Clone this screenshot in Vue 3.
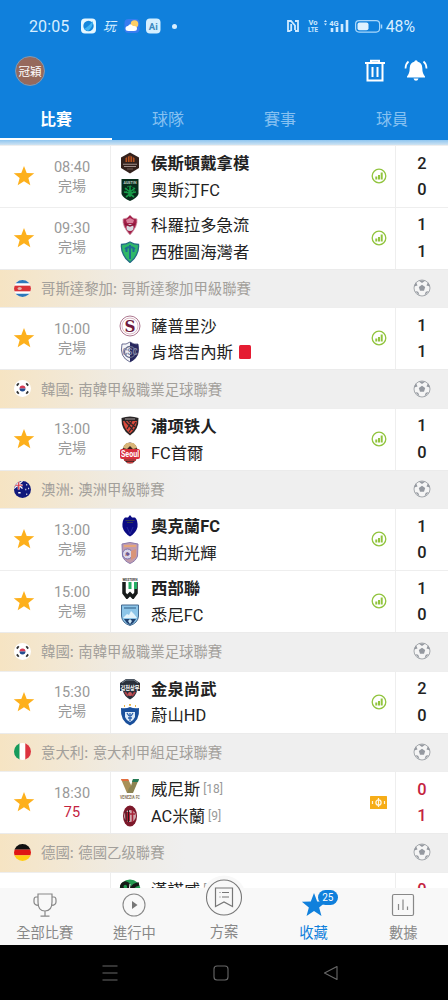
<template>
  <div class="app">
    <svg class="defs" aria-hidden="true">
      <symbol id="crest-houston" viewBox="0 0 22 22">
        <path d="M11 .5L20 5.5V16L11 21.500L2 16V5.500Z" fill="#33211c" />
        <path d="M6.500 6L11 3.500L15.500 6V10H6.500Z" fill="#b6531f" />
        <path d="M8.500 5V10M11 4V10M13.500 5V10" stroke="#51271b" stroke-width="1" />
        <path d="M4 12.200H18M5 14.500H17" stroke="#a08e89" stroke-width="1.100" />
        <path d="M8 17H14" stroke="#6d5750" stroke-width="1" />
      </symbol>
      <symbol id="crest-austin" viewBox="0 0 22 22">
        <path d="M2.500 0H19.500V15Q18 19 11 22Q4 19 2.500 15Z" fill="#072c1b" />
        <path d="M11 7V18M11 13L6 9M11 13L16 9M11 14L5 13M11 14L17 13M11 15L7 18M11 15L15 18" stroke="#179c49" stroke-width="1.600" />
        <circle cx="11" cy="11" r="4" fill="none" stroke="#179c49" stroke-dasharray="2 1" />
      </symbol>
      <symbol id="crest-colorado" viewBox="0 0 22 22">
        <path d="M11 1L14 4L18 5Q19 12 11 21Q3 12 4 5L8 4Z" fill="#a32149" stroke="#d39aac" stroke-width=".8" />
        <path d="M7 6L11 4L15 6L14 9H8Z" fill="#d87f9a" />
        <circle cx="11" cy="13.500" r="3.500" fill="#d9dce2" />
        <path d="M6 10L11 12L16 10" stroke="#8a1538" stroke-width="1.500" fill="none" />
      </symbol>
      <symbol id="crest-seattle" viewBox="0 0 22 22">
        <path d="M11 1Q15 3.500 19.500 3.500Q20.500 14 11 21.500Q1.500 14 2.500 3.500Q7 3.500 11 1Z" fill="#2fb968" stroke="#236d85" stroke-width="1.300" />
        <path d="M11 4V18M6 8Q11 4 16 8M7.500 7V11M14.500 7V11" stroke="#1d6c91" stroke-width="2" fill="none" />
      </symbol>
      <symbol id="crest-saprissa" viewBox="0 0 22 22">
        <circle cx="11" cy="11" r="10" fill="#fff" stroke="#ae7991" stroke-width="1" />
        <circle cx="11" cy="11" r="8" fill="#fff" stroke="#d3a9b7" stroke-width=".8" />
      </symbol>
      <symbol id="crest-cartagines" viewBox="0 0 22 22">
        <path d="M11 1Q15 4 19 3Q22 16 11 21Q0 16 3 3Q7 4 11 1Z" fill="#f3f4f8" stroke="#33386a" stroke-width=".7" />
        <path d="M11 1Q15 4 19 3Q22 16 11 21Z" fill="#27275e" />
        <circle cx="11" cy="11" r="5.500" fill="none" stroke="#636888" stroke-width="1.300" />
      </symbol>
      <symbol id="crest-pohang" viewBox="0 0 22 22">
        <path d="M2.500 3Q11 0 19.500 3Q20 15 11 20.500Q2 15 2.500 3Z" fill="#292526" />
        <path d="M4 6H18Q17 14 11 18.500Q5 14 4 6Z" fill="#d94a3c" />
        <path d="M6 6L14 15M9 6L16 12M13 6L8 14M17 7L10 17" stroke="#31272a" stroke-width="1.200" />
        <path d="M6 4H16" stroke="#a69a99" stroke-width="1" />
      </symbol>
      <symbol id="crest-seoul" viewBox="0 0 22 22">
        <ellipse cx="11" cy="11" rx="8" ry="10.500" fill="#3a2021" />
        <path d="M4 6Q6 0 11 1Q16 0 18 6L14 7L11 4L8 7Z" fill="#d9b578" />
        <rect x="1" y="7" width="20" height="10" rx="2" fill="#d7303b" />
        <path d="M5 18H17M8 20.500H14" stroke="#ce3f3f" stroke-width="1.500" />
      </symbol>
      <symbol id="crest-auckland" viewBox="0 0 22 22">
        <path d="M11 0L13 2.500H16Q19 5 18.500 12Q17 18 11 21.500Q5 18 3.500 12Q3 5 6 2.500H9Z" fill="#0b0b83" />
        <path d="M6.500 5.500H15.500M8 7.500H14" stroke="#353b4d" stroke-width="1" />
        <path d="M8 12L11 19L14 12" stroke="#28289c" fill="none" />
      </symbol>
      <symbol id="crest-perth" viewBox="0 0 22 22">
        <path d="M3 2Q11-1 19 2L18.500 14Q17 19 11 21.500Q5 19 3.500 14Z" fill="#c29cac" stroke="#8b7cad" />
        <path d="M5 4H17" stroke="#e5a679" stroke-width="2" />
        <circle cx="8.500" cy="12" r="5" fill="#d8d6eb" stroke="#7970aa" />
        <path d="M7 10L10 11L9 14L6 14ZM12 9L17 7V15L12 18Z" fill="#d99579" />
        <path d="M8.500 10L11 12L9 14L6.500 12Z" fill="#66599e" />
      </symbol>
      <symbol id="crest-western" viewBox="0 0 22 22">
        <path d="M5 5V16L8 20L11 17L14 20L17 16V5" fill="none" stroke="#171b1b" stroke-width="3.500" />
        <path d="M11 5V12M16.500 5V12" stroke="#25ae65" stroke-width="3" />
        <path d="M8 5V15M14 5V15" stroke="#fff" stroke-width="1" />
      </symbol>
      <symbol id="crest-sydney" viewBox="0 0 22 22">
        <path d="M2.500 1H19.500V12Q19 19 11 21.500Q3 19 2.500 12Z" fill="#8dc5e8" stroke="#42698f" />
        <path d="M5 4H17" stroke="#4d7da5" stroke-width="1.500" />
        <path d="M4 14L8 10L10 11L12 7L15 10L18 14Z" fill="#e4f3fb" />
        <path d="M5 15H17Q15 19 11 21Q7 19 5 15Z" fill="#20416f" />
        <path d="M11 15L13 17L11 20L9 17Z" fill="#cbe6f4" />
      </symbol>
      <symbol id="crest-gimcheon" viewBox="0 0 22 22">
        <path d="M4 3L7 1H15L18 3L21 5V13H18Q17 18 11 21.500Q5 18 4 13H1V5Z" fill="#29303b" />
        <path d="M3 5L7 2H15L19 5" stroke="#768491" fill="none" />
        <path d="M6 14L9 18M16 14L13 18" stroke="#ac4046" stroke-width="2" />
        <circle cx="11" cy="16" r="2" fill="#cd5b5f" />
      </symbol>
      <symbol id="crest-ulsan" viewBox="0 0 22 22">
        <path d="M5 2H6M10 .8H12M16 2H17" stroke="#e6b44a" stroke-width="1.800" />
        <path d="M2 4Q7 5 11 3Q15 5 20 4Q21 17 11 21.500Q1 17 2 4Z" fill="#194f9b" />
        <path d="M6 8H16V13Q15 16 11 18Q7 16 6 13Z" fill="#dce9f7" />
        <path d="M8 9L10 12M14 9L12 12M9 14H13M11 9V17" stroke="#2860ac" stroke-width="1.300" />
      </symbol>
      <symbol id="crest-venezia" viewBox="0 0 22 22">
        <path d="M2 1H9L13 9L11 15H8Z" fill="#a99057" />
        <path d="M2 1H9L10 3H3Z" fill="#e26d3e" />
        <path d="M14 1H20L14 15H8L10 10L12 8Z" fill="#8c8353" />
        <path d="M14 1H20L19 4H13Z" fill="#247a55" />
      </symbol>
      <symbol id="crest-milan" viewBox="0 0 22 22">
        <ellipse cx="11" cy="11" rx="7" ry="10.500" fill="#7c182a" />
        <circle cx="11" cy="11" r="6" fill="#d0aab0" />
        <path d="M6 7H11V16H7Z" fill="#ab2034" />
        <path d="M7 6V16M9.500 5V17" stroke="#26171c" stroke-width="1" />
        <path d="M13.500 5V17M11 9H16" stroke="#a72539" stroke-width="1.600" />
      </symbol>
      <symbol id="crest-hannover" viewBox="0 0 22 22">
        <circle cx="11" cy="11" r="10.500" fill="#239a50" />
        <path d="M9.500 9A3.500 3.500 0 1 0 5.500 11M10 7Q10 13 6 17M20 5Q12 6 12.500 14" fill="none" stroke="#141916" stroke-width="3.500" />
        <path d="M11 5L10 14" stroke="#fff" stroke-width="1" />
      </symbol>

      <symbol id="flag-cr" viewBox="0 0 18 18">
        <rect width="18" height="18" fill="#fff" />
        <path d="M0 0H18V3.500H0ZM0 14.500H18V18H0Z" fill="#2d78bb" />
        <rect y="6" width="18" height="6" fill="#d93439" />
        <ellipse cx="6" cy="9" rx="2.200" ry="1.700" fill="#e3b6ac" />
      </symbol>
      <symbol id="flag-kr" viewBox="0 0 18 18">
        <rect width="18" height="18" fill="#fff" />
        <path d="M5.800 9A3.200 3.200 0 0 1 12.200 9Z" fill="#d63b55" />
        <path d="M5.800 9A3.200 3.200 0 0 0 12.200 9Z" fill="#234d91" />
        <path d="M3 6L5 3.500M13 3.500L15 6M3 12L5 14.500M13 14.500L15 12" stroke="#333" stroke-width="1.900" />
      </symbol>
      <symbol id="flag-au" viewBox="0 0 18 18">
        <rect width="18" height="18" fill="#11197c" />
        <path d="M0 0L9 8M9 0L0 8" stroke="#fff" stroke-width="1.300" />
        <path d="M5 0V9M0 4.500H9" stroke="#fff" stroke-width="2.200" />
        <path d="M5 0V9M0 4.500H9" stroke="#d63b49" stroke-width="1.300" />
        <path d="M4.500 12.500H7M13 4H14M12 9H13M15 8H16M13 14H14" stroke="#fff" stroke-width="1.600" />
      </symbol>
      <symbol id="flag-it" viewBox="0 0 18 18">
        <rect width="6" height="18" fill="#169b5b" />
        <rect x="6" width="6" height="18" fill="#fff" />
        <rect x="12" width="6" height="18" fill="#dc3340" />
      </symbol>
      <symbol id="flag-de" viewBox="0 0 18 18">
        <rect width="18" height="6" fill="#111" />
        <rect y="6" width="18" height="6" fill="#df1714" />
        <rect y="12" width="18" height="6" fill="#ffce13" />
      </symbol>
      <symbol id="star" viewBox="0 0 24 24">
        <path d="M12 1L14.950 8.700L23.200 9.100L16.750 14.200L18.900 22.200L12 17.650L5.100 22.200L7.250 14.200L.8 9.100L9.050 8.700Z" />
      </symbol>
    </svg>

    <header class="header">
      <div class="status">
        <span class="status__time">20:05</span>
        <svg class="status__apps" width="92" height="18" viewBox="0 0 92 18">
          <rect x="0" y="1.500" width="15" height="15" rx="4" fill="#e6f7ff" />
          <circle cx="7.500" cy="9" r="5.200" fill="#1587dc" />
          <path d="M3 12Q7 10 12 4Q12 10 7 14Z" fill="#42b5f4" />
          <text x="22" y="14" class="status__play">玩</text>
          <rect x="43.500" y="2" width="15" height="14" rx="4" fill="#397cf0" />
          <circle cx="53.500" cy="7" r="3.800" fill="#ffce67" />
          <path d="M47.500 14Q44.500 14 44.500 11.500Q44.500 9 47 9Q49 5.500 52 9Q56 8.500 56 11.500Q56 14 53 14Z" fill="#fff" />
          <rect x="65" y="1.500" width="14.500" height="15" rx="4" fill="#d4efff" />
          <text x="72.300" y="12.500" font-size="9.500" font-weight="700" fill="#3b88bd" text-anchor="middle">Ai</text>
        </svg>
        <span class="status__dot"></span>
        <svg class="status__signals" width="98" height="16" viewBox="0 0 98 16">
          <path d="M4.500 13H2V3H5L9 7.500V12M9 3H12V13H9M5.200 6V13" fill="none" stroke="#d0eaff" stroke-width="1.800" />
          <text x="27" y="7" font-size="7.500" font-weight="700" fill="#d0eaff" text-anchor="middle">Vo</text>
          <text x="27" y="14" font-size="7.500" font-weight="700" fill="#d0eaff" text-anchor="middle" textLength="10" lengthAdjust="spacingAndGlyphs">LTE</text>
          <path d="M38 4L39.500 2L41 4M38 5.500L39.500 7.500L41 5.500" fill="#d0eaff" />
          <text x="48" y="7.500" font-size="7.500" font-weight="700" fill="#d0eaff" text-anchor="middle">4G</text>
          <path d="M46 10V14M51 9V14M56 6V14M61 2V14" stroke="#d0eaff" stroke-width="2.600" />
          <rect x="69.600" y="2.600" width="24" height="11.500" rx="3.500" fill="none" stroke="#a9d7fb" stroke-width="1.200" />
          <rect x="71.500" y="4.500" width="11" height="7.700" rx="2" fill="#def1ff" />
          <path d="M95.500 6.500V10.500" stroke="#a9d7fb" stroke-width="1.500" />
        </svg>
        <span class="status__battery">48%</span>
      </div>

      <div class="toolbar">
        <span class="avatar">冠穎</span>
        <svg class="toolbar__trash" width="22" height="24" viewBox="0 0 22 24" fill="none" stroke="#fff" stroke-width="2">
          <path d="M1 4H21M7 3V1.800H15V3M3.500 4.500V21.500H18.500V4.500M8.500 8V18M13.500 8V18" />
        </svg>
        <svg width="24" height="24" viewBox="0 0 24 24">
          <path d="M12 1.200Q13.500 1.200 13.700 2.800Q18 3.800 18.300 9Q18.300 14.500 21 17.500V18.500H3V17.500Q5.700 14.500 5.700 9Q6 3.800 10.300 2.800Q10.500 1.200 12 1.200ZM9.500 19.500H14.500Q13.900 21.700 12 21.700Q10.100 21.700 9.500 19.500Z" fill="#fff" />
          <path d="M4.500 2.500Q1.500 5 1.500 9.500M19.500 2.500Q22.500 5 22.500 9.500" fill="none" stroke="#fff" stroke-width="1.700" />
        </svg>
      </div>

      <nav class="tabs">
        <a v-for="(tab, i) in tabs" :key="tab" class="tab" :class="{ 'tab--active': i === 0 }">{{ tab }}</a>
      </nav>
    </header>

    <main class="list">
      <template v-for="(row, i) in rows" :key="i">
        <div v-if="row.league" class="league">
          <svg class="league__flag"><use :href="'#flag-' + row.flag" /></svg>
          <span class="league__name">{{ row.league }}</span>
          <svg class="league__ball" width="18" height="18" viewBox="0 0 18 18">
            <circle cx="9" cy="9" r="8" fill="#f5f5f5" stroke="#a5a9ad" stroke-width="1" />
            <path d="M9 5.700L12.200 8L11 11.700H7L5.800 8ZM5.500 1.500H12.500L9 4ZM1 7.500L3 3L4.500 6.500ZM17 7.500L15 3L13.500 6.500ZM2 12L5.200 12.800L6.700 16.700ZM16 12L12.800 12.800L11.300 16.700Z" fill="#9599a0" />
          </svg>
        </div>

        <div v-else class="match" :class="{ 'match--live': row.live }">
          <svg class="match__star"><use href="#star" /></svg>
          <div class="match__time">
            <span>{{ row.time }}</span>
            <span class="match__state">{{ row.state }}</span>
          </div>
          <div class="match__teams">
            <div v-for="(team, t) in row.teams" :key="t" class="team" :class="{ 'team--winner': team.winner }">
              <svg class="team__crest" viewBox="0 0 22 22">
                <use v-if="team.crest" :href="'#crest-' + team.crest" />
                <text
                  v-if="marks[team.crest]"
                  x="11"
                  :y="marks[team.crest].y"
                  :font-size="marks[team.crest].size"
                  :fill="marks[team.crest].fill"
                  :textLength="marks[team.crest].width"
                  :class="'mark mark--' + team.crest"
                  lengthAdjust="spacingAndGlyphs"
                >{{ marks[team.crest].text }}</text>
              </svg>
              <span class="team__name">{{ team.name }}</span>
              <span v-if="team.rank" class="team__rank">[{{ team.rank }}]</span>
              <i v-if="team.redCard" class="team__card"></i>
            </div>
          </div>
          <div class="match__extra">
            <svg v-if="row.live" width="17" height="13" viewBox="0 0 17 13">
              <rect width="17" height="13" rx=".5" fill="#f6ad18" />
              <ellipse cx="8.500" cy="6.500" rx="2.600" ry="2.700" fill="none" stroke="#fff5df" stroke-width="1.300" />
              <path d="M8.500 2V11M2.500 5V8M14.500 5V8" stroke="#fff5df" stroke-width="1.200" />
            </svg>
            <svg v-else width="16" height="16" viewBox="0 0 16 16">
              <circle cx="8" cy="8" r="6.800" fill="none" stroke="#91c43e" stroke-width="1.300" />
              <path d="M5.300 8.500V11.500M8 7V11.500M10.700 4.500V11.500" stroke="#91c43e" stroke-width="2" />
            </svg>
          </div>
          <div class="match__score">
            <span v-for="(team, t) in row.teams" :key="t">{{ team.score }}</span>
          </div>
        </div>
      </template>
    </main>

    <nav class="bottom">
      <a class="bottom__item">
        <svg width="26" height="26" viewBox="0 0 26 26" fill="none" stroke="#888" stroke-width="1.200">
          <path d="M6 2H20V10Q20 19 13 19Q6 19 6 10ZM6 5H4Q2 5 2 8V10Q2 13 6.500 13.500M20 5H22Q24 5 24 8V10Q24 13 19.500 13.500M13 19V24M8.500 24.200H17.500" />
        </svg>
        <span>全部比賽</span>
      </a>
      <a class="bottom__item">
        <svg width="26" height="26" viewBox="0 0 26 26">
          <circle cx="13" cy="13" r="11" fill="none" stroke="#888" stroke-width="1.100" />
          <path d="M11 9L16.500 13L11 17Z" fill="#777" />
        </svg>
        <span>進行中</span>
      </a>
      <a class="bottom__item bottom__item--center">
        <svg width="46" height="46" viewBox="0 0 46 46">
          <circle cx="23" cy="22.500" r="22" fill="#f8f8f8" />
          <circle cx="23" cy="22.500" r="17.500" fill="none" stroke="#777" stroke-width="1.100" />
          <path d="M14.500 13H31.500V31.500L23 27L14.500 31.500ZM18.500 17.500H19.500M21 17.500H28M18.500 22H19.500M21 22H28" fill="none" stroke="#777" stroke-width="1.200" />
        </svg>
        <span>方案</span>
      </a>
      <a class="bottom__item bottom__item--active">
        <svg width="26" height="26" viewBox="0 0 24 24"><use href="#star" /></svg>
        <em class="badge">25</em>
        <span>收藏</span>
      </a>
      <a class="bottom__item">
        <svg width="26" height="26" viewBox="0 0 26 26" fill="none" stroke="#888" stroke-width="1.200">
          <rect x="2.500" y="2.500" width="21" height="21" rx="1.500" />
          <path d="M8.500 12V18M13 7.500V18M17.500 14.500V18" />
        </svg>
        <span>數據</span>
      </a>
    </nav>

    <footer class="system">
      <svg width="18" height="18" viewBox="0 0 18 18"><path d="M1.500 2H16.500M1.500 9H16.500M1.500 16H16.500" /></svg>
      <svg width="18" height="18" viewBox="0 0 18 18"><rect x="2" y="2" width="14" height="14" rx="3" /></svg>
      <svg width="18" height="18" viewBox="0 0 18 18"><path d="M15 2.500V15.500L2.500 9Z" stroke-linejoin="round" /></svg>
    </footer>
  </div>
</template>

<script setup>
const tabs = ['比賽', '球隊', '賽事', '球員']

// Lettering printed on some of the crests
const marks = {
  austin: { text: 'AUSTIN', y: 4.8, size: 4.4, width: 13, fill: '#c3d3c9' },
  saprissa: { text: 'S', y: 17, size: 17, width: 11, fill: '#701b3d' },
  cartagines: { text: 'CSC', y: 14, size: 8.5, width: 15, fill: '#8085a5' },
  seoul: { text: 'Seoul', y: 15, size: 9, width: 18, fill: '#fff' },
  western: { text: 'WESTERN', y: 3.8, size: 4, width: 15, fill: '#444' },
  gimcheon: { text: '김천상무', y: 11.5, size: 6, width: 19, fill: '#fff' },
  venezia: { text: 'VENEZIA FC', y: 20.5, size: 4.6, width: 20, fill: '#88765c' },
}

const rows = [
  {
    time: '08:40',
    state: '完場',
    teams: [
      { name: '侯斯頓戴拿模', crest: 'houston', score: 2, winner: true },
      { name: '奧斯汀FC', crest: 'austin', score: 0 },
    ],
  },
  {
    time: '09:30',
    state: '完場',
    teams: [
      { name: '科羅拉多急流', crest: 'colorado', score: 1 },
      { name: '西雅圖海灣者', crest: 'seattle', score: 1 },
    ],
  },
  { league: '哥斯達黎加: 哥斯達黎加甲級聯賽', flag: 'cr' },
  {
    time: '10:00',
    state: '完場',
    teams: [
      { name: '薩普里沙', crest: 'saprissa', score: 1 },
      { name: '肯塔吉內斯', crest: 'cartagines', score: 1, redCard: true },
    ],
  },
  { league: '韓國: 南韓甲級職業足球聯賽', flag: 'kr' },
  {
    time: '13:00',
    state: '完場',
    teams: [
      { name: '浦项铁人', crest: 'pohang', score: 1, winner: true },
      { name: 'FC首爾', crest: 'seoul', score: 0 },
    ],
  },
  { league: '澳洲: 澳洲甲級聯賽', flag: 'au' },
  {
    time: '13:00',
    state: '完場',
    teams: [
      { name: '奧克蘭FC', crest: 'auckland', score: 1, winner: true },
      { name: '珀斯光輝', crest: 'perth', score: 0 },
    ],
  },
  {
    time: '15:00',
    state: '完場',
    teams: [
      { name: '西部聯', crest: 'western', score: 1, winner: true },
      { name: '悉尼FC', crest: 'sydney', score: 0 },
    ],
  },
  { league: '韓國: 南韓甲級職業足球聯賽', flag: 'kr' },
  {
    time: '15:30',
    state: '完場',
    teams: [
      { name: '金泉尚武', crest: 'gimcheon', score: 2, winner: true },
      { name: '蔚山HD', crest: 'ulsan', score: 0 },
    ],
  },
  { league: '意大利: 意大利甲組足球聯賽', flag: 'it' },
  {
    time: '18:30',
    state: '75',
    live: true,
    teams: [
      { name: '威尼斯', crest: 'venezia', score: 0, rank: 18 },
      { name: 'AC米蘭', crest: 'milan', score: 1, rank: 9 },
    ],
  },
  { league: '德國: 德國乙级聯賽', flag: 'de' },
  {
    time: '',
    state: '',
    live: true,
    teams: [
      { name: '漢諾威', crest: 'hannover', score: 0, rank: 6 },
      { name: '', crest: '', score: '' },
    ],
  },
]
</script>

<style>
body {
  margin: 0;
  background: #000;
}
</style>

<style scoped>
.app {
  width: 448px;
  height: 1000px;
  display: flex;
  flex-direction: column;
  overflow: hidden;
  background: #fff;
  font-family: Roboto, 'Noto Sans CJK TC', sans-serif;
}

.app svg {
  display: block;
  flex-shrink: 0;
}

.app .defs {
  position: absolute;
  width: 0;
  height: 0;
}

.header {
  flex-shrink: 0;
  height: 140px;
  display: flex;
  flex-direction: column;
  background: #1080dc;
  color: #fff;
}

.status {
  height: 52px;
  display: flex;
  align-items: center;
  padding: 0 33px 0 29px;
  box-sizing: border-box;
  color: #d7eeff;
}

.status__time {
  width: 52px;
  font-size: 16px;
  letter-spacing: 0.1px;
}

.status__play {
  font-size: 13px;
  font-style: italic;
  fill: #d7eeff;
}

.status__dot {
  width: 5px;
  height: 5px;
  margin-left: -1px;
  border-radius: 50%;
  background: #d7eeff;
}

.status__signals {
  margin-left: auto;
}

.status__battery {
  margin-left: 2px;
  font-size: 15.8px;
}

.toolbar {
  height: 38px;
  display: flex;
  align-items: center;
  padding: 0 20px 0 15px;
}

.avatar {
  width: 28px;
  height: 28px;
  display: flex;
  align-items: center;
  justify-content: center;
  border: 1.5px solid #7f9bb7;
  border-radius: 50%;
  background: #96695c;
  font-size: 11.5px;
  white-space: nowrap;
}

.toolbar__trash {
  margin-left: auto;
  margin-right: 18px;
}

.tabs {
  flex: 1;
  display: flex;
}

.tab {
  flex: 1;
  display: flex;
  align-items: center;
  justify-content: center;
  padding-top: 7px;
  border-bottom: 2px solid transparent;
  font-size: 16px;
  color: #87c1f1;
}

.tab--active {
  border-bottom-color: #fff;
  font-weight: 700;
  color: #fff;
}

.list {
  flex: 1;
  min-height: 0;
  padding-top: 5.1px;
  overflow: hidden;
  background: linear-gradient(#8fc6f0, #cfe3f2 5px, #fff 6px);
}

.league {
  height: 38.55px;
  box-sizing: border-box;
  display: flex;
  align-items: center;
  padding: 0 17px 1px 14px;
  border-top: 1px solid #ebebeb;
  background: linear-gradient(90deg, #f6e4c3, #efebe3 120px, #efefef 185px);
}

.league__flag {
  width: 17px;
  height: 17px;
  border-radius: 50%;
}

.league__name {
  margin-left: 10px;
  font-family: 'Noto Sans CJK TC', sans-serif;
  font-size: 14.4px;
  line-height: 20px;
  word-spacing: 1.3px;
  color: #a3a09b;
}

.league__ball {
  margin-left: auto;
}

.match {
  height: 61.9px;
  box-sizing: border-box;
  display: grid;
  grid-template-columns: 48px 62px 1fr 33px 53px;
  align-items: center;
  border-top: 1px solid #eee;
  background: #fff;
}

.match__star {
  width: 22px;
  height: 22px;
  margin-left: 13px;
  margin-bottom: 1px;
  fill: #fdb01c;
}

.match__time {
  width: 48px;
  display: flex;
  flex-direction: column;
  align-items: center;
  font-size: 14.5px;
  line-height: 19px;
  color: #999;
}

.match__state {
  font-size: 14px;
}

.match__teams {
  height: 100%;
  display: flex;
  flex-direction: column;
  justify-content: center;
  border-left: 1px solid #eee;
  padding-left: 8px;
}

.team {
  height: 26.5px;
  display: flex;
  align-items: center;
  font-size: 16.4px;
  line-height: 26px;
  color: #222;
  white-space: nowrap;
}

.team--winner {
  font-weight: 700;
}

.team__crest {
  width: 22px;
  height: 22px;
  margin-right: 10px;
}

.team__name {
  padding-top: 2px;
}

.team__rank {
  margin-left: 3px;
  font-size: 12px;
  color: #999;
}

.team__card {
  width: 12px;
  height: 14px;
  margin-left: 6px;
  border-radius: 1.5px;
  background: #e51c32;
}

.mark {
  font-weight: 700;
  text-anchor: middle;
}

.mark--saprissa {
  font-family: 'DejaVu Serif', serif;
}

.mark--gimcheon {
  font-family: 'Noto Sans CJK KR', sans-serif;
}

.match__extra {
  display: flex;
  justify-content: center;
  padding-bottom: 1px;
}

.match__score {
  height: 100%;
  display: flex;
  flex-direction: column;
  align-items: center;
  justify-content: center;
  box-sizing: border-box;
  padding-top: 1px;
  border-left: 1px solid #eee;
  font-size: 16.4px;
  font-weight: 500;
  line-height: 26.5px;
  color: #222;
}

.match__score span {
  height: 26.5px;
}

.match--live .match__state,
.match--live .match__score {
  color: #c4233f;
}

.match--live .match__state {
  font-size: 14.5px;
}

.bottom {
  position: relative;
  flex-shrink: 0;
  height: 57px;
  display: flex;
  background: #f8f8f8;
}

.bottom__item {
  position: relative;
  flex: 1;
  display: flex;
  flex-direction: column;
  align-items: center;
  padding-top: 4px;
  font-size: 14.3px;
  line-height: 20px;
  color: #888;
}

.bottom__item span {
  margin-top: 5px;
}

.bottom__item--center svg {
  margin-top: -17px;
}

.bottom__item--center span {
  margin-top: 1px;
}

.bottom__item--active {
  color: #1080dc;
  fill: #1080dc;
}

.badge {
  position: absolute;
  top: 2px;
  left: 49px;
  width: 20px;
  height: 15px;
  border-radius: 8px;
  background: #1080dc;
  font-size: 10px;
  font-style: normal;
  line-height: 15px;
  text-align: center;
  color: #fff;
}

.system {
  flex-shrink: 0;
  height: 55px;
  display: flex;
  align-items: center;
  justify-content: center;
  gap: 92.5px;
  padding-right: 7px;
  background: #000;
}

.system svg {
  fill: none;
  stroke: #686868;
  stroke-width: 1.1;
}
</style>
